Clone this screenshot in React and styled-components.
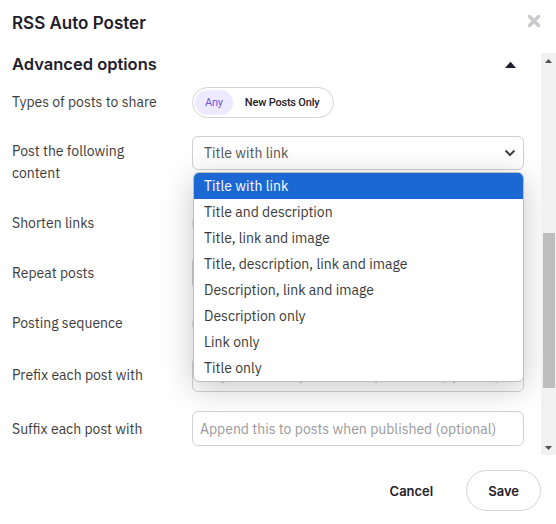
import React, { useLayoutEffect, useRef, useState } from 'react';
import styled, { createGlobalStyle } from 'styled-components';

const GlobalStyle = createGlobalStyle`
  html, body { margin: 0; padding: 0; background: #fff; }
  body { font-family: "IBM Plex Sans", "Noto Sans", "Open Sans", sans-serif; }
  * { box-sizing: border-box; }
`;

const Modal = styled.div`
  width: 556px;
  height: 524px;
  display: flex;
  flex-direction: column;
  background: #fff;
`;

const Header = styled.div`
  height: 53px;
  flex: none;
  display: flex;
  align-items: flex-start;
  justify-content: space-between;
  padding: 12px 15px 0 12px;
`;

const Title = styled.h1`
  margin: 0;
  font-family: Inter, "Noto Sans", sans-serif;
  font-size: 17px;
  font-weight: 600;
  line-height: 22px;
  color: #1f202b;
`;

const Close = styled.button`
  border: 0;
  background: none;
  padding: 0;
  margin-top: 2px;
  width: 14px;
  height: 14px;
  cursor: pointer;
  display: flex;
`;

const BodyFrame = styled.div`
  flex: none;
  height: 402px;
  display: flex;
`;

const Body = styled.div`
  flex: 1;
  min-width: 0;
  overflow: hidden;
  padding: 12px 17px 0 12px;
`;

const Rail = styled.div`
  width: 15px;
  flex: none;
  display: flex;
  flex-direction: column;
  background: #f1f1f1;
`;

const RailButton = styled.div`
  height: 15px;
  flex: none;
  display: flex;
  align-items: center;
  justify-content: center;
`;

const Track = styled.div`
  flex: 1;
  position: relative;
`;

const Thumb = styled.div`
  position: absolute;
  left: 2px;
  right: 1px;
  background: #bdbdbd;
`;

const Section = styled.div`
  display: flex;
  flex-direction: column;
  gap: 16px;
  padding-bottom: ${p => p.$pb || 0}px;
`;

const SectionHead = styled.div`
  display: flex;
  align-items: center;
  justify-content: space-between;
  height: 22px;
  margin-bottom: -7px;
  padding-right: 8px;
`;

const SectionTitle = styled.h2`
  margin: 0;
  font-family: Inter, "Noto Sans", sans-serif;
  font-size: 16.5px;
  font-weight: 600;
  line-height: 22px;
  color: #1f202b;
`;

const Row = styled.div`
  display: grid;
  grid-template-columns: 180px 1fr;
  align-items: ${p => (p.$top ? 'start' : 'center')};
  min-height: ${p => p.$h || 34}px;
  margin-top: ${p => p.$mt || 0}px;
`;

const Label = styled.div`
  font-size: 14px;
  line-height: 22px;
  color: #3c3c3c;
  padding-top: ${p => (p.$top ? 4 : 0)}px;
  padding-right: 22px;
`;

const Pill = styled.div`
  display: inline-flex;
  align-items: center;
  justify-self: start;
  height: 31px;
  padding: 2px;
  border: 1px solid #d4d4d8;
  border-radius: 16px;
  background: #fff;
`;

const PillOption = styled.span`
  height: 25px;
  display: flex;
  align-items: center;
  padding: 0 ${p => (p.$active ? 10 : 12)}px;
  border-radius: 13px;
  font-family: Roboto, "Noto Sans", sans-serif;
  font-size: 11px;
  letter-spacing: -0.2px;
  font-weight: ${p => (p.$active ? 400 : 500)};
  color: ${p => (p.$active ? '#6a56e6' : '#1f202b')};
  background: ${p => (p.$active ? '#ede9fe' : 'transparent')};
`;

const SelectWrap = styled.div`
  position: relative;
`;

const SelectBox = styled.div`
  height: 34px;
  display: flex;
  align-items: center;
  justify-content: space-between;
  padding: 0 7px 0 11px;
  border: 1px solid #cfcfcf;
  border-radius: 6px;
  background: #fff;
  font-size: 14px;
  color: #555;
`;

const Input = styled.input`
  width: 100%;
  height: 35px;
  padding: 0 7px;
  border: 1px solid #d2d2d2;
  border-radius: 6px;
  font-family: inherit;
  font-size: 14px;
  color: #333;
  outline: none;
  &::placeholder { color: #9a9a9a; }
`;

const Menu = styled.ul`
  position: absolute;
  top: calc(100% + 2px);
  left: 1px;
  right: 0;
  margin: 0;
  padding: 0;
  list-style: none;
  background: #fff;
  border: 1px solid #bdbdbd;
  border-radius: 6px;
  overflow: hidden;
  box-shadow: 0 6px 32px rgba(0, 0, 0, 0.22);
  z-index: 5;
`;

const MenuItem = styled.li`
  height: 26px;
  display: flex;
  align-items: center;
  padding-left: 10px;
  font-size: 14px;
  color: ${p => (p.$selected ? '#fff' : '#3a3a3a')};
  background: ${p => (p.$selected ? '#1b67d3' : 'transparent')};
`;

const Footer = styled.div`
  flex: 1;
  display: flex;
  align-items: flex-start;
  justify-content: flex-end;
  gap: 33px;
  padding: 15px 15px 0 0;
`;

const Button = styled.button`
  height: 41px;
  padding: 0 ${p => (p.$outline ? 21 : 0)}px;
  border: ${p => (p.$outline ? '1px solid #d4d4d8' : '0')};
  border-radius: 21px;
  background: #fff;
  font-family: Inter, "Noto Sans", sans-serif;
  font-size: 13px;
  font-weight: 600;
  color: #1f202b;
  cursor: pointer;
`;

const options = [
  'Title with link',
  'Title and description',
  'Title, link and image',
  'Title, description, link and image',
  'Description, link and image',
  'Description only',
  'Link only',
  'Title only',
];

const CloseIcon = () => (
  <svg width="14" height="14" viewBox="0 0 14 14">
    <path d="M2.5 2.5 L11.5 11.5 M11.5 2.5 L2.5 11.5" stroke="#c9c9cd" strokeWidth="3.4" strokeLinecap="round" />
  </svg>
);

const Caret = () => (
  <svg width="11" height="7" viewBox="0 0 11 7">
    <path d="M0 7 L5.5 0.8 L11 7 Z" fill="#1f202b" />
  </svg>
);

const RailArrow = ({ down }) => (
  <svg width="7" height="4" viewBox="0 0 7 4">
    <path d={down ? 'M0 0 L7 0 L3.5 4 Z' : 'M0 4 L3.5 0 L7 4 Z'} fill="#505050" />
  </svg>
);

const Chevron = () => (
  <svg width="12" height="8" viewBox="0 0 12 8">
    <path d="M1.5 1.5 L6 6 L10.5 1.5" stroke="#444" strokeWidth="2" fill="none" />
  </svg>
);

const Toggle = ({ items, active }) => (
  <Pill>
    {items.map(i => (
      <PillOption key={i} $active={i === active}>{i}</PillOption>
    ))}
  </Pill>
);

export default function App() {
  const bodyRef = useRef(null);
  const advRef = useRef(null);
  const [thumb, setThumb] = useState({ top: 0, height: 0 });

  useLayoutEffect(() => {
    const el = bodyRef.current;
    el.scrollTop = advRef.current.offsetTop - el.offsetTop;
    const track = el.clientHeight - 30;
    setThumb({
      top: (track * el.scrollTop) / el.scrollHeight,
      height: (track * el.clientHeight) / el.scrollHeight,
    });
  }, []);

  return (
    <>
      <GlobalStyle />
      <Modal>
        <Header>
          <Title>RSS Auto Poster</Title>
          <Close aria-label="Close"><CloseIcon /></Close>
        </Header>
        <BodyFrame>
          <Body ref={bodyRef}>
            <Section $pb={26}>
              <Row><Label>Feed URL</Label><Input defaultValue="https://example.com/feed" /></Row>
              <Row><Label>Feed name</Label><Input placeholder="My blog" /></Row>
              <Row><Label>Post to</Label><Input placeholder="Choose accounts" /></Row>
              <Row><Label>Check feed every</Label><SelectBox>1 hour<Chevron /></SelectBox></Row>
              <Row><Label>Posts per check</Label><SelectBox>1<Chevron /></SelectBox></Row>
              <Row><Label>Status</Label><Toggle items={['Active', 'Paused']} active="Active" /></Row>
              <Row><Label>Queue type</Label><Toggle items={['Queue', 'Share now']} active="Queue" /></Row>
              <Row><Label>Add hashtags</Label><Toggle items={['No', 'Yes']} active="No" /></Row>
            </Section>
            <div ref={advRef}>
              <Section $pb={92}>
                <SectionHead>
                  <SectionTitle>Advanced options</SectionTitle>
                  <Caret />
                </SectionHead>
                <Row $h={36}>
                  <Label>Types of posts to share</Label>
                  <Toggle items={['Any', 'New Posts Only']} active="Any" />
                </Row>
                <Row $top $h={54}>
                  <Label $top>Post the following content</Label>
                  <SelectWrap>
                    <SelectBox>Title with link<Chevron /></SelectBox>
                    <Menu>
                      {options.map((o, i) => (
                        <MenuItem key={o} $selected={i === 0}>{o}</MenuItem>
                      ))}
                    </Menu>
                  </SelectWrap>
                </Row>
                <Row>
                  <Label>Shorten links</Label>
                  <Toggle items={['No', 'Yes']} active="No" />
                </Row>
                <Row>
                  <Label>Repeat posts</Label>
                  <SelectBox>Never<Chevron /></SelectBox>
                </Row>
                <Row>
                  <Label>Posting sequence</Label>
                  <Toggle items={['Newest first', 'Oldest first']} active="Newest first" />
                </Row>
                <Row $h={35} $mt={1}>
                  <Label>Prefix each post with</Label>
                  <Input placeholder="Prepend this to posts when published (optional)" />
                </Row>
                <Row $h={35} $mt={3}>
                  <Label>Suffix each post with</Label>
                  <Input placeholder="Append this to posts when published (optional)" />
                </Row>
                <Row>
                  <Label>Exclude keywords</Label>
                  <Input placeholder="Comma separated (optional)" />
                </Row>
              </Section>
            </div>
          </Body>
          <Rail>
            <RailButton><RailArrow /></RailButton>
            <Track>
              <Thumb style={{ top: thumb.top, height: thumb.height }} />
            </Track>
            <RailButton><RailArrow down /></RailButton>
          </Rail>
        </BodyFrame>
        <Footer>
          <Button>Cancel</Button>
          <Button $outline>Save</Button>
        </Footer>
      </Modal>
    </>
  );
}
